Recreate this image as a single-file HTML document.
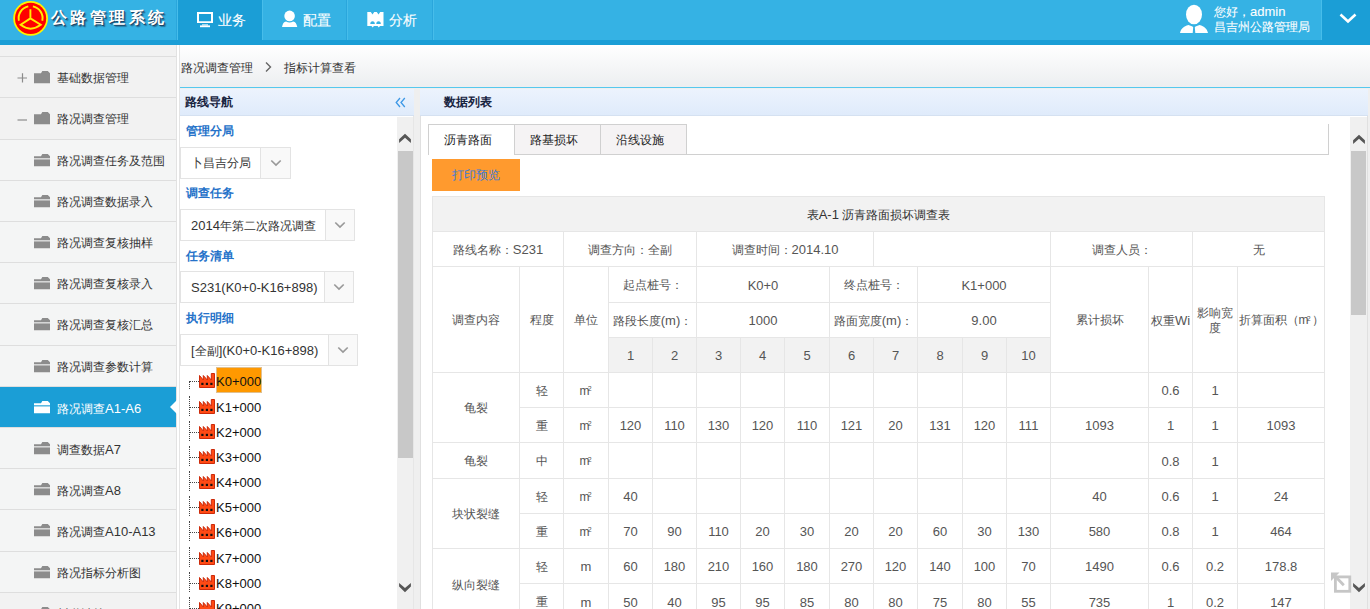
<!DOCTYPE html><html><head><meta charset="utf-8"><style>
*{margin:0;padding:0;box-sizing:border-box}
html,body{width:1370px;height:609px;overflow:hidden;background:#fff;font-family:"Liberation Sans", sans-serif;font-size:12px;color:#333}
.ab{position:absolute}
.t{position:absolute;white-space:nowrap;line-height:1}

</style></head><body>
<div class="ab" style="left:0;top:0;width:1370px;height:40px;background:#35b2e4"></div>
<div class="ab" style="left:0;top:40px;width:1370px;height:5px;background:#1b9ed6"></div>
<div class="ab" style="left:178px;top:0;width:84px;height:40px;background:#1b9ed6"></div>
<div class="ab" style="left:176px;top:0;width:1px;height:40px;background:#2aa6dc"></div>
<div class="ab" style="left:346px;top:0;width:1px;height:40px;background:#2aa6dc"></div>
<div class="ab" style="left:432px;top:0;width:1px;height:40px;background:#2aa6dc"></div>
<div class="ab" style="left:177px;top:0;width:1px;height:40px;background:#47bdea"></div>
<div class="ab" style="left:262px;top:0;width:1px;height:40px;background:#47bdea"></div>
<div class="ab" style="left:347px;top:0;width:1px;height:40px;background:#47bdea"></div>
<div class="ab" style="left:433px;top:0;width:1px;height:40px;background:#47bdea"></div>
<div class="ab" style="left:1321px;top:0;width:1px;height:40px;background:#47bdea"></div>
<div class="ab" style="left:1322px;top:0;width:48px;height:40px;background:#1b9ed6"></div>
<svg class="ab" style="left:12px;top:0px" width="38" height="38" viewBox="0 0 38 38">
<circle cx="18.6" cy="18.4" r="17.4" fill="#fff200"/>
<circle cx="18.6" cy="18.4" r="15.6" fill="#f00"/>
<g fill="none" stroke="#ffee00" stroke-width="1.9">
<path d="M16.3 6.4 A12 12 0 0 0 6.9 20.8"/>
<path d="M20.9 6.4 A12 12 0 0 1 30.3 20.8"/>
<path d="M18.4 9.3 V18.4 L8.6 24.8 Q18.6 32.5 28.8 24.8 L18.4 18.4"/>
</g></svg>
<div class="t" style="left:51px;top:10px;font-size:16px;font-weight:bold;color:#fff;letter-spacing:3.4px;text-shadow:1px 1px 0 #1d4666,2px 2px 1px rgba(10,40,70,.45)">公路管理系统</div>
<svg class="ab" style="left:197px;top:12px" width="17" height="16" viewBox="0 0 17 16">
<path d="M0 0H16V11H0Z M2 2V9.2H14V2Z" fill="#fff" fill-rule="evenodd"/>
<rect x="5" y="12.4" width="6" height="1" fill="#fff"/><rect x="3" y="13.4" width="10" height="1.8" fill="#fff"/></svg>
<div class="t" style="left:218px;top:13px;font-size:14px;color:#fff;-webkit-text-stroke:0.12px #fff">业务</div>
<svg class="ab" style="left:281px;top:10px" width="18" height="18" viewBox="0 0 18 18">
<circle cx="8.6" cy="5.9" r="5.3" fill="#fff"/>
<path d="M1 17 C1.8 13.5 2.8 12 5 11.6 C6.3 12.2 7.4 12.5 8.6 12.5 C9.8 12.5 10.9 12.2 12.2 11.6 C14.4 12 15.4 13.5 16.3 17Z" fill="#fff"/></svg>
<div class="t" style="left:303px;top:13px;font-size:14px;color:#fff;-webkit-text-stroke:0.12px #fff">配置</div>
<svg class="ab" style="left:367px;top:12px" width="17" height="16" viewBox="0 0 17 16">
<path d="M0.3 0 H3.8 L5.5 2.6 L7.2 0 H9.8 L11.5 2.6 L13.2 0 H16.5 V14 H13 L11.8 15.5 L10.6 14 H6.9 L5.7 15.5 L4.5 14 H0.3Z" fill="#fff"/>
<path d="M3.3 12 A2.25 2.7 0 0 1 7.8 12Z M9.3 12 A2.25 2.7 0 0 1 13.8 12Z" fill="#35b2e4"/></svg>
<div class="t" style="left:389px;top:13px;font-size:14px;color:#fff;-webkit-text-stroke:0.12px #fff">分析</div>
<svg class="ab" style="left:1179px;top:4px" width="30" height="30" viewBox="0 0 30 30">
<ellipse cx="15" cy="10.5" rx="8" ry="9.8" fill="#fff"/>
<path d="M1 29 C2 24.5 4.5 22.5 9.5 21 L13.5 22.5 L14.2 23.2 L13.7 29 H16.3 L15.8 23.2 L16.5 22.5 L20.5 21 C25.5 22.5 28 24.5 29 29Z" fill="#fff"/></svg>
<div class="t" style="left:1214px;top:4px;font-size:12px;color:#fff;line-height:15px;-webkit-text-stroke:0.1px #fff">您好，<span style="font-size:13px">admin</span><br>昌吉州公路管理局</div>
<svg class="ab" style="left:1339px;top:13px" width="18" height="11" viewBox="0 0 18 11">
<path d="M1.5 1.5 L9 8.5 L16.5 1.5" fill="none" stroke="#fff" stroke-width="2.6"/></svg>
<div class="ab" style="left:0;top:45px;width:176px;height:564px;background:#f2f2f2"></div>
<div class="ab" style="left:0;top:139px;width:176px;height:453px;background:#f4f5f5"></div>
<div class="ab" style="left:176px;top:45px;width:1px;height:564px;background:#e2e2e2"></div>
<div class="ab" style="left:177px;top:45px;width:2px;height:564px;background:#fff"></div>
<div class="ab" style="left:179px;top:45px;width:1px;height:564px;background:#e4e4e4"></div>
<div class="ab" style="left:0;top:56px;width:176px;height:1px;background:#dedede"></div>
<div class="ab" style="left:0;top:97px;width:176px;height:1px;background:#dedede"></div>
<div class="ab" style="left:0;top:139px;width:176px;height:1px;background:#dedede"></div>
<div class="ab" style="left:0;top:180px;width:176px;height:1px;background:#dedede"></div>
<div class="ab" style="left:0;top:221px;width:176px;height:1px;background:#dedede"></div>
<div class="ab" style="left:0;top:262px;width:176px;height:1px;background:#dedede"></div>
<div class="ab" style="left:0;top:303px;width:176px;height:1px;background:#dedede"></div>
<div class="ab" style="left:0;top:345px;width:176px;height:1px;background:#dedede"></div>
<div class="ab" style="left:0;top:386px;width:176px;height:1px;background:#dedede"></div>
<div class="ab" style="left:0;top:427px;width:176px;height:1px;background:#dedede"></div>
<div class="ab" style="left:0;top:468px;width:176px;height:1px;background:#dedede"></div>
<div class="ab" style="left:0;top:509px;width:176px;height:1px;background:#dedede"></div>
<div class="ab" style="left:0;top:551px;width:176px;height:1px;background:#dedede"></div>
<div class="ab" style="left:0;top:592px;width:176px;height:1px;background:#dedede"></div>
<svg class="ab" style="left:34px;top:71.0px" width="16" height="13" viewBox="0 0 16 13"><path d="M0 2.2 H7 L8.3 0 H13.8 L16 2.2 V12.2 H0Z" fill="#8c8c8c"/></svg>
<div class="t" style="left:57px;top:72px;font-size:12px;color:#333">基础数据管理</div>
<svg class="ab" style="left:17px;top:72px" width="11" height="11" viewBox="0 0 11 11"><path d="M0.5 6 H10 M5.5 1.3 V10.5" stroke="#8c8c8c" stroke-width="1.2"/></svg>
<svg class="ab" style="left:34px;top:112.0px" width="16" height="13" viewBox="0 0 16 13"><path d="M0 2.2 H7 L8.3 0 H13.8 L16 2.2 V12.2 H0Z" fill="#8c8c8c"/></svg>
<div class="t" style="left:57px;top:113px;font-size:12px;color:#333">路况调查管理</div>
<svg class="ab" style="left:17px;top:114px" width="11" height="11" viewBox="0 0 11 11"><path d="M0.5 6 H10" stroke="#8c8c8c" stroke-width="1.2"/></svg>
<svg class="ab" style="left:34px;top:154.0px" width="16" height="13" viewBox="0 0 16 13"><path d="M0 2.2 H7 L8.3 0 H13.8 L16 2.2 V12.2 H0Z" fill="#8c8c8c"/><rect x="0" y="4.3" width="16" height="1.1" fill="#f4f5f5"/></svg>
<div class="t" style="left:57px;top:155px;font-size:12px;color:#333">路况调查任务及范围</div>
<svg class="ab" style="left:34px;top:195.0px" width="16" height="13" viewBox="0 0 16 13"><path d="M0 2.2 H7 L8.3 0 H13.8 L16 2.2 V12.2 H0Z" fill="#8c8c8c"/><rect x="0" y="4.3" width="16" height="1.1" fill="#f4f5f5"/></svg>
<div class="t" style="left:57px;top:196px;font-size:12px;color:#333">路况调查数据录入</div>
<svg class="ab" style="left:34px;top:236.0px" width="16" height="13" viewBox="0 0 16 13"><path d="M0 2.2 H7 L8.3 0 H13.8 L16 2.2 V12.2 H0Z" fill="#8c8c8c"/><rect x="0" y="4.3" width="16" height="1.1" fill="#f4f5f5"/></svg>
<div class="t" style="left:57px;top:237px;font-size:12px;color:#333">路况调查复核抽样</div>
<svg class="ab" style="left:34px;top:277.0px" width="16" height="13" viewBox="0 0 16 13"><path d="M0 2.2 H7 L8.3 0 H13.8 L16 2.2 V12.2 H0Z" fill="#8c8c8c"/><rect x="0" y="4.3" width="16" height="1.1" fill="#f4f5f5"/></svg>
<div class="t" style="left:57px;top:278px;font-size:12px;color:#333">路况调查复核录入</div>
<svg class="ab" style="left:34px;top:318.0px" width="16" height="13" viewBox="0 0 16 13"><path d="M0 2.2 H7 L8.3 0 H13.8 L16 2.2 V12.2 H0Z" fill="#8c8c8c"/><rect x="0" y="4.3" width="16" height="1.1" fill="#f4f5f5"/></svg>
<div class="t" style="left:57px;top:319px;font-size:12px;color:#333">路况调查复核汇总</div>
<svg class="ab" style="left:34px;top:360.0px" width="16" height="13" viewBox="0 0 16 13"><path d="M0 2.2 H7 L8.3 0 H13.8 L16 2.2 V12.2 H0Z" fill="#8c8c8c"/><rect x="0" y="4.3" width="16" height="1.1" fill="#f4f5f5"/></svg>
<div class="t" style="left:57px;top:361px;font-size:12px;color:#333">路况调查参数计算</div>
<div class="ab" style="left:0;top:387px;width:176px;height:40px;background:#1b9ed6"></div>
<svg class="ab" style="left:169px;top:400px" width="8" height="14" viewBox="0 0 8 14"><path d="M8 0 L1 7 L8 14Z" fill="#fff"/></svg>
<svg class="ab" style="left:34px;top:401.0px" width="16" height="13" viewBox="0 0 16 13"><path d="M0 2.2 H7 L8.3 0 H13.8 L16 2.2 V12.2 H0Z" fill="#fff"/><rect x="0" y="4.3" width="16" height="1.1" fill="#1b9ed6"/></svg>
<div class="t" style="left:57px;top:402px;font-size:12px;color:#fff">路况调查<span style="font-size:13px">A1-A6</span></div>
<svg class="ab" style="left:34px;top:442.0px" width="16" height="13" viewBox="0 0 16 13"><path d="M0 2.2 H7 L8.3 0 H13.8 L16 2.2 V12.2 H0Z" fill="#8c8c8c"/><rect x="0" y="4.3" width="16" height="1.1" fill="#f4f5f5"/></svg>
<div class="t" style="left:57px;top:443px;font-size:12px;color:#333">调查数据<span style="font-size:13px">A7</span></div>
<svg class="ab" style="left:34px;top:483.0px" width="16" height="13" viewBox="0 0 16 13"><path d="M0 2.2 H7 L8.3 0 H13.8 L16 2.2 V12.2 H0Z" fill="#8c8c8c"/><rect x="0" y="4.3" width="16" height="1.1" fill="#f4f5f5"/></svg>
<div class="t" style="left:57px;top:484px;font-size:12px;color:#333">路况调查<span style="font-size:13px">A8</span></div>
<svg class="ab" style="left:34px;top:524.0px" width="16" height="13" viewBox="0 0 16 13"><path d="M0 2.2 H7 L8.3 0 H13.8 L16 2.2 V12.2 H0Z" fill="#8c8c8c"/><rect x="0" y="4.3" width="16" height="1.1" fill="#f4f5f5"/></svg>
<div class="t" style="left:57px;top:525px;font-size:12px;color:#333">路况调查<span style="font-size:13px">A10-A13</span></div>
<svg class="ab" style="left:34px;top:566.0px" width="16" height="13" viewBox="0 0 16 13"><path d="M0 2.2 H7 L8.3 0 H13.8 L16 2.2 V12.2 H0Z" fill="#8c8c8c"/><rect x="0" y="4.3" width="16" height="1.1" fill="#f4f5f5"/></svg>
<div class="t" style="left:57px;top:567px;font-size:12px;color:#333">路况指标分析图</div>
<svg class="ab" style="left:34px;top:607.0px" width="16" height="13" viewBox="0 0 16 13"><path d="M0 2.2 H7 L8.3 0 H13.8 L16 2.2 V12.2 H0Z" fill="#8c8c8c"/></svg>
<div class="t" style="left:57px;top:608px;font-size:12px;color:#333">川道计算</div>
<svg class="ab" style="left:17px;top:608px" width="11" height="11" viewBox="0 0 11 11"><path d="M0.5 6 H10 M5.5 1.3 V10.5" stroke="#8c8c8c" stroke-width="1.2"/></svg>
<div class="ab" style="left:180px;top:45px;width:1190px;height:42px;background:linear-gradient(#fff,#eceef0)"></div>
<div class="ab" style="left:180px;top:87px;width:1190px;height:1px;background:#55c8ee"></div>
<div class="ab" style="left:180px;top:88px;width:1190px;height:521px;background:#efefef"></div>
<div class="t" style="left:181px;top:62px;font-size:12px;color:#333">路况调查管理</div>
<svg class="ab" style="left:264px;top:61px" width="9" height="12" viewBox="0 0 9 12"><path d="M2 1.5 L6.5 6 L2 10.5" fill="none" stroke="#666" stroke-width="1.4"/></svg>
<div class="t" style="left:284px;top:62px;font-size:12px;color:#333">指标计算查看</div>
<div class="ab" style="left:180px;top:89px;width:234px;height:520px;background:#fff;border-right:1px solid #e6e6e6"></div>
<div class="ab" style="left:180px;top:89px;width:234px;height:27px;background:linear-gradient(#ecf3fd,#dfebfb);border-bottom:1px solid #d5e1f1"></div>
<div class="t" style="left:185px;top:96px;font-size:12px;font-weight:bold;color:#17233f">路线导航</div>
<svg class="ab" style="left:395px;top:97px" width="11" height="11" viewBox="0 0 11 11"><path d="M5 1 L1.2 5.5 L5 10 M9.8 1 L6 5.5 L9.8 10" fill="none" stroke="#3d98e6" stroke-width="1.3"/></svg>
<div class="t" style="left:186px;top:125px;font-size:12px;font-weight:bold;color:#2572c9">管理分局</div>
<div class="t" style="left:186px;top:187px;font-size:12px;font-weight:bold;color:#2572c9">调查任务</div>
<div class="t" style="left:186px;top:250px;font-size:12px;font-weight:bold;color:#2572c9">任务清单</div>
<div class="t" style="left:186px;top:312px;font-size:12px;font-weight:bold;color:#2572c9">执行明细</div>
<div class="ab" style="left:180px;top:147px;width:111px;height:32px;border:1px solid #e3e3e3;background:#fff"></div>
<div class="ab" style="left:260px;top:147px;width:31px;height:32px;border:1px solid #e3e3e3;background:#f9f9f9"></div>
<svg class="ab" style="left:270px;top:159px" width="12" height="8" viewBox="0 0 12 8"><path d="M1.3 1.5 L6 6 L10.7 1.5" fill="none" stroke="#999" stroke-width="1.7"/></svg>
<div class="t" style="left:191px;top:157px;font-size:12px;color:#333">卜昌吉分局</div>
<div class="ab" style="left:180px;top:209px;width:175px;height:32px;border:1px solid #e3e3e3;background:#fff"></div>
<div class="ab" style="left:325px;top:209px;width:30px;height:32px;border:1px solid #e3e3e3;background:#f9f9f9"></div>
<svg class="ab" style="left:334px;top:221px" width="12" height="8" viewBox="0 0 12 8"><path d="M1.3 1.5 L6 6 L10.7 1.5" fill="none" stroke="#999" stroke-width="1.7"/></svg>
<div class="t" style="left:191px;top:219px;font-size:12px;color:#333"><span style="font-size:13px">2014</span>年第二次路况调查</div>
<div class="ab" style="left:180px;top:271px;width:174px;height:32px;border:1px solid #e3e3e3;background:#fff"></div>
<div class="ab" style="left:324px;top:271px;width:30px;height:32px;border:1px solid #e3e3e3;background:#f9f9f9"></div>
<svg class="ab" style="left:333px;top:283px" width="12" height="8" viewBox="0 0 12 8"><path d="M1.3 1.5 L6 6 L10.7 1.5" fill="none" stroke="#999" stroke-width="1.7"/></svg>
<div class="t" style="left:191px;top:281px;font-size:12px;color:#333"><span style="font-size:13px">S231(K0+0-K16+898)</span></div>
<div class="ab" style="left:180px;top:334px;width:178px;height:32px;border:1px solid #e3e3e3;background:#fff"></div>
<div class="ab" style="left:328px;top:334px;width:30px;height:32px;border:1px solid #e3e3e3;background:#f9f9f9"></div>
<svg class="ab" style="left:337px;top:346px" width="12" height="8" viewBox="0 0 12 8"><path d="M1.3 1.5 L6 6 L10.7 1.5" fill="none" stroke="#999" stroke-width="1.7"/></svg>
<div class="t" style="left:191px;top:344px;font-size:12px;color:#333"><span style="font-size:13px">[</span>全副<span style="font-size:13px">](K0+0-K16+898)</span></div>
<div class="ab" style="left:216px;top:367px;width:46px;height:26px;background:#ff9900;border:1px solid #e0c090"></div>
<div class="ab" style="left:189px;top:381px;width:1px;height:8px;border-left:1px dotted #444"></div>
<div class="ab" style="left:190px;top:381px;width:9px;height:1px;border-top:1px dotted #444"></div>
<svg class="ab" style="left:199px;top:372.5px" width="16" height="15" viewBox="0 0 16 15">
<path d="M0.5 14.5 V2.5 L4.3 7 V2.5 L8.3 7 V2.5 L12.3 7 V0.5 H15.5 V14.5Z" fill="#ff4a14" stroke="#cc2a0a" stroke-width="1" stroke-linejoin="miter"/>
<rect x="2.3" y="9.8" width="2.2" height="2.2" fill="#111"/><rect x="6.8" y="9.8" width="2.2" height="2.2" fill="#111"/><rect x="11.3" y="9.8" width="2.2" height="2.2" fill="#111"/></svg>
<div class="t" style="left:216px;top:375px;font-size:13px;color:#111">K0+000</div>
<div class="ab" style="left:189px;top:396px;width:1px;height:20px;border-left:1px dotted #444"></div>
<div class="ab" style="left:190px;top:407px;width:9px;height:1px;border-top:1px dotted #444"></div>
<svg class="ab" style="left:199px;top:398.5px" width="16" height="15" viewBox="0 0 16 15">
<path d="M0.5 14.5 V2.5 L4.3 7 V2.5 L8.3 7 V2.5 L12.3 7 V0.5 H15.5 V14.5Z" fill="#ff4a14" stroke="#cc2a0a" stroke-width="1" stroke-linejoin="miter"/>
<rect x="2.3" y="9.8" width="2.2" height="2.2" fill="#111"/><rect x="6.8" y="9.8" width="2.2" height="2.2" fill="#111"/><rect x="11.3" y="9.8" width="2.2" height="2.2" fill="#111"/></svg>
<div class="t" style="left:216px;top:401px;font-size:13px;color:#111">K1+000</div>
<div class="ab" style="left:189px;top:421px;width:1px;height:20px;border-left:1px dotted #444"></div>
<div class="ab" style="left:190px;top:432px;width:9px;height:1px;border-top:1px dotted #444"></div>
<svg class="ab" style="left:199px;top:423.5px" width="16" height="15" viewBox="0 0 16 15">
<path d="M0.5 14.5 V2.5 L4.3 7 V2.5 L8.3 7 V2.5 L12.3 7 V0.5 H15.5 V14.5Z" fill="#ff4a14" stroke="#cc2a0a" stroke-width="1" stroke-linejoin="miter"/>
<rect x="2.3" y="9.8" width="2.2" height="2.2" fill="#111"/><rect x="6.8" y="9.8" width="2.2" height="2.2" fill="#111"/><rect x="11.3" y="9.8" width="2.2" height="2.2" fill="#111"/></svg>
<div class="t" style="left:216px;top:426px;font-size:13px;color:#111">K2+000</div>
<div class="ab" style="left:189px;top:446px;width:1px;height:20px;border-left:1px dotted #444"></div>
<div class="ab" style="left:190px;top:457px;width:9px;height:1px;border-top:1px dotted #444"></div>
<svg class="ab" style="left:199px;top:448.5px" width="16" height="15" viewBox="0 0 16 15">
<path d="M0.5 14.5 V2.5 L4.3 7 V2.5 L8.3 7 V2.5 L12.3 7 V0.5 H15.5 V14.5Z" fill="#ff4a14" stroke="#cc2a0a" stroke-width="1" stroke-linejoin="miter"/>
<rect x="2.3" y="9.8" width="2.2" height="2.2" fill="#111"/><rect x="6.8" y="9.8" width="2.2" height="2.2" fill="#111"/><rect x="11.3" y="9.8" width="2.2" height="2.2" fill="#111"/></svg>
<div class="t" style="left:216px;top:451px;font-size:13px;color:#111">K3+000</div>
<div class="ab" style="left:189px;top:471px;width:1px;height:20px;border-left:1px dotted #444"></div>
<div class="ab" style="left:190px;top:482px;width:9px;height:1px;border-top:1px dotted #444"></div>
<svg class="ab" style="left:199px;top:473.5px" width="16" height="15" viewBox="0 0 16 15">
<path d="M0.5 14.5 V2.5 L4.3 7 V2.5 L8.3 7 V2.5 L12.3 7 V0.5 H15.5 V14.5Z" fill="#ff4a14" stroke="#cc2a0a" stroke-width="1" stroke-linejoin="miter"/>
<rect x="2.3" y="9.8" width="2.2" height="2.2" fill="#111"/><rect x="6.8" y="9.8" width="2.2" height="2.2" fill="#111"/><rect x="11.3" y="9.8" width="2.2" height="2.2" fill="#111"/></svg>
<div class="t" style="left:216px;top:476px;font-size:13px;color:#111">K4+000</div>
<div class="ab" style="left:189px;top:496px;width:1px;height:20px;border-left:1px dotted #444"></div>
<div class="ab" style="left:190px;top:507px;width:9px;height:1px;border-top:1px dotted #444"></div>
<svg class="ab" style="left:199px;top:498.5px" width="16" height="15" viewBox="0 0 16 15">
<path d="M0.5 14.5 V2.5 L4.3 7 V2.5 L8.3 7 V2.5 L12.3 7 V0.5 H15.5 V14.5Z" fill="#ff4a14" stroke="#cc2a0a" stroke-width="1" stroke-linejoin="miter"/>
<rect x="2.3" y="9.8" width="2.2" height="2.2" fill="#111"/><rect x="6.8" y="9.8" width="2.2" height="2.2" fill="#111"/><rect x="11.3" y="9.8" width="2.2" height="2.2" fill="#111"/></svg>
<div class="t" style="left:216px;top:501px;font-size:13px;color:#111">K5+000</div>
<div class="ab" style="left:189px;top:521px;width:1px;height:20px;border-left:1px dotted #444"></div>
<div class="ab" style="left:190px;top:532px;width:9px;height:1px;border-top:1px dotted #444"></div>
<svg class="ab" style="left:199px;top:523.5px" width="16" height="15" viewBox="0 0 16 15">
<path d="M0.5 14.5 V2.5 L4.3 7 V2.5 L8.3 7 V2.5 L12.3 7 V0.5 H15.5 V14.5Z" fill="#ff4a14" stroke="#cc2a0a" stroke-width="1" stroke-linejoin="miter"/>
<rect x="2.3" y="9.8" width="2.2" height="2.2" fill="#111"/><rect x="6.8" y="9.8" width="2.2" height="2.2" fill="#111"/><rect x="11.3" y="9.8" width="2.2" height="2.2" fill="#111"/></svg>
<div class="t" style="left:216px;top:526px;font-size:13px;color:#111">K6+000</div>
<div class="ab" style="left:189px;top:547px;width:1px;height:20px;border-left:1px dotted #444"></div>
<div class="ab" style="left:190px;top:558px;width:9px;height:1px;border-top:1px dotted #444"></div>
<svg class="ab" style="left:199px;top:549.5px" width="16" height="15" viewBox="0 0 16 15">
<path d="M0.5 14.5 V2.5 L4.3 7 V2.5 L8.3 7 V2.5 L12.3 7 V0.5 H15.5 V14.5Z" fill="#ff4a14" stroke="#cc2a0a" stroke-width="1" stroke-linejoin="miter"/>
<rect x="2.3" y="9.8" width="2.2" height="2.2" fill="#111"/><rect x="6.8" y="9.8" width="2.2" height="2.2" fill="#111"/><rect x="11.3" y="9.8" width="2.2" height="2.2" fill="#111"/></svg>
<div class="t" style="left:216px;top:552px;font-size:13px;color:#111">K7+000</div>
<div class="ab" style="left:189px;top:572px;width:1px;height:20px;border-left:1px dotted #444"></div>
<div class="ab" style="left:190px;top:583px;width:9px;height:1px;border-top:1px dotted #444"></div>
<svg class="ab" style="left:199px;top:574.5px" width="16" height="15" viewBox="0 0 16 15">
<path d="M0.5 14.5 V2.5 L4.3 7 V2.5 L8.3 7 V2.5 L12.3 7 V0.5 H15.5 V14.5Z" fill="#ff4a14" stroke="#cc2a0a" stroke-width="1" stroke-linejoin="miter"/>
<rect x="2.3" y="9.8" width="2.2" height="2.2" fill="#111"/><rect x="6.8" y="9.8" width="2.2" height="2.2" fill="#111"/><rect x="11.3" y="9.8" width="2.2" height="2.2" fill="#111"/></svg>
<div class="t" style="left:216px;top:577px;font-size:13px;color:#111">K8+000</div>
<div class="ab" style="left:189px;top:597px;width:1px;height:20px;border-left:1px dotted #444"></div>
<div class="ab" style="left:190px;top:608px;width:9px;height:1px;border-top:1px dotted #444"></div>
<svg class="ab" style="left:199px;top:599.5px" width="16" height="15" viewBox="0 0 16 15">
<path d="M0.5 14.5 V2.5 L4.3 7 V2.5 L8.3 7 V2.5 L12.3 7 V0.5 H15.5 V14.5Z" fill="#ff4a14" stroke="#cc2a0a" stroke-width="1" stroke-linejoin="miter"/>
<rect x="2.3" y="9.8" width="2.2" height="2.2" fill="#111"/><rect x="6.8" y="9.8" width="2.2" height="2.2" fill="#111"/><rect x="11.3" y="9.8" width="2.2" height="2.2" fill="#111"/></svg>
<div class="t" style="left:216px;top:602px;font-size:13px;color:#111">K9+000</div>
<div class="ab" style="left:397px;top:117px;width:16px;height:492px;background:#f0f0f0"></div>
<div class="ab" style="left:398px;top:151px;width:15px;height:307px;background:#c8c8c8"></div>
<svg class="ab" style="left:398px;top:133px" width="14" height="10" viewBox="0 0 14 10"><path d="M1.1 6.2 L7 0.8 L12.9 6.2 V10 L7 4.8 L1.1 10Z" fill="#565656"/></svg>
<svg class="ab" style="left:398px;top:583px" width="14" height="10" viewBox="0 0 14 10"><path d="M1.1 0 L7 5 L12.9 0 V3.6 L7 9.2 L1.1 3.6Z" fill="#565656"/></svg>
<div class="ab" style="left:420px;top:89px;width:948px;height:520px;background:#fff;border-left:1px solid #e0e0e0;border-right:1px solid #e0e0e0"></div>
<div class="ab" style="left:420px;top:89px;width:948px;height:27px;background:linear-gradient(#ecf3fd,#dfebfb);border-bottom:1px solid #d5e1f1"></div>
<div class="t" style="left:444px;top:96px;font-size:12px;font-weight:bold;color:#17233f">数据列表</div>
<div class="ab" style="left:428px;top:154px;width:901px;height:1px;background:#d0d0d0"></div>
<div class="ab" style="left:1328px;top:124px;width:1px;height:31px;background:#d0d0d0"></div>
<div class="ab" style="left:428px;top:124px;width:87px;height:31px;border:1px solid #d0d0d0;border-bottom:none;background:#fff"></div>
<div class="t" style="left:444px;top:134px;font-size:12px;color:#222">沥青路面</div>
<div class="ab" style="left:514px;top:124px;width:87px;height:31px;border:1px solid #d0d0d0;background:#f5f3f4"></div>
<div class="t" style="left:530px;top:134px;font-size:12px;color:#222">路基损坏</div>
<div class="ab" style="left:600px;top:124px;width:87px;height:31px;border:1px solid #d0d0d0;background:#f5f3f4"></div>
<div class="t" style="left:616px;top:134px;font-size:12px;color:#222">沿线设施</div>
<div class="ab" style="left:429px;top:154px;width:85px;height:1px;background:#fff"></div>
<div class="ab" style="left:432px;top:159px;width:88px;height:32px;background:#ff9a2e"></div>
<div class="t" style="left:452px;top:169px;font-size:12px;color:#3b7bd6">打印预览</div>
<div class="ab" style="left:432px;top:196px;width:894px;height:413px;background:#fff"></div>
<div class="ab" style="left:432px;top:196px;width:893px;height:36px;background:#f2f2f2;border:1px solid #e6e6e6;display:flex;align-items:center;justify-content:center;text-align:center;color:#555;font-size:12px;line-height:15px;padding-top:2px;color:#333;"><span>表<span style="font-size:13px">A-1</span> 沥青路面损坏调查表</span></div>
<div class="ab" style="left:432px;top:231px;width:132px;height:36px;border:1px solid #e6e6e6;display:flex;align-items:center;justify-content:center;text-align:center;color:#555;font-size:12px;line-height:15px;padding-top:2px;"><span>路线名称：<span style="font-size:13px">S231</span></span></div>
<div class="ab" style="left:563px;top:231px;width:134px;height:36px;border:1px solid #e6e6e6;display:flex;align-items:center;justify-content:center;text-align:center;color:#555;font-size:12px;line-height:15px;padding-top:2px;"><span>调查方向：全副</span></div>
<div class="ab" style="left:696px;top:231px;width:178px;height:36px;border:1px solid #e6e6e6;display:flex;align-items:center;justify-content:center;text-align:center;color:#555;font-size:12px;line-height:15px;padding-top:2px;"><span>调查时间：<span style="font-size:13px">2014.10</span></span></div>
<div class="ab" style="left:873px;top:231px;width:178px;height:36px;border:1px solid #e6e6e6;display:flex;align-items:center;justify-content:center;text-align:center;color:#555;font-size:12px;line-height:15px;padding-top:2px;"><span></span></div>
<div class="ab" style="left:1050px;top:231px;width:143px;height:36px;border:1px solid #e6e6e6;display:flex;align-items:center;justify-content:center;text-align:center;color:#555;font-size:12px;line-height:15px;padding-top:2px;"><span>调查人员：</span></div>
<div class="ab" style="left:1192px;top:231px;width:133px;height:36px;border:1px solid #e6e6e6;display:flex;align-items:center;justify-content:center;text-align:center;color:#555;font-size:12px;line-height:15px;padding-top:2px;"><span>无</span></div>
<div class="ab" style="left:432px;top:266px;width:88px;height:107px;border:1px solid #e6e6e6;display:flex;align-items:center;justify-content:center;text-align:center;color:#555;font-size:12px;line-height:15px;padding-top:2px;"><span>调查内容</span></div>
<div class="ab" style="left:519px;top:266px;width:45px;height:107px;border:1px solid #e6e6e6;display:flex;align-items:center;justify-content:center;text-align:center;color:#555;font-size:12px;line-height:15px;padding-top:2px;"><span>程度</span></div>
<div class="ab" style="left:563px;top:266px;width:46px;height:107px;border:1px solid #e6e6e6;display:flex;align-items:center;justify-content:center;text-align:center;color:#555;font-size:12px;line-height:15px;padding-top:2px;"><span>单位</span></div>
<div class="ab" style="left:608px;top:266px;width:89px;height:37px;border:1px solid #e6e6e6;display:flex;align-items:center;justify-content:center;text-align:center;color:#555;font-size:12px;line-height:15px;padding-top:2px;"><span>起点桩号：</span></div>
<div class="ab" style="left:696px;top:266px;width:134px;height:37px;border:1px solid #e6e6e6;display:flex;align-items:center;justify-content:center;text-align:center;color:#555;font-size:12px;line-height:15px;padding-top:2px;"><span><span style="font-size:13px">K0+0</span></span></div>
<div class="ab" style="left:829px;top:266px;width:89px;height:37px;border:1px solid #e6e6e6;display:flex;align-items:center;justify-content:center;text-align:center;color:#555;font-size:12px;line-height:15px;padding-top:2px;"><span>终点桩号：</span></div>
<div class="ab" style="left:917px;top:266px;width:134px;height:37px;border:1px solid #e6e6e6;display:flex;align-items:center;justify-content:center;text-align:center;color:#555;font-size:12px;line-height:15px;padding-top:2px;"><span><span style="font-size:13px">K1+000</span></span></div>
<div class="ab" style="left:608px;top:302px;width:89px;height:36px;border:1px solid #e6e6e6;display:flex;align-items:center;justify-content:center;text-align:center;color:#555;font-size:12px;line-height:15px;padding-top:2px;"><span>路段长度<span style="font-size:13px">(m)</span>：</span></div>
<div class="ab" style="left:696px;top:302px;width:134px;height:36px;border:1px solid #e6e6e6;display:flex;align-items:center;justify-content:center;text-align:center;color:#555;font-size:12px;line-height:15px;padding-top:2px;"><span><span style="font-size:13px">1000</span></span></div>
<div class="ab" style="left:829px;top:302px;width:89px;height:36px;border:1px solid #e6e6e6;display:flex;align-items:center;justify-content:center;text-align:center;color:#555;font-size:12px;line-height:15px;padding-top:2px;"><span>路面宽度<span style="font-size:13px">(m)</span>：</span></div>
<div class="ab" style="left:917px;top:302px;width:134px;height:36px;border:1px solid #e6e6e6;display:flex;align-items:center;justify-content:center;text-align:center;color:#555;font-size:12px;line-height:15px;padding-top:2px;"><span><span style="font-size:13px">9.00</span></span></div>
<div class="ab" style="left:608px;top:337px;width:45px;height:36px;background:#f2f2f2;border:1px solid #e6e6e6;display:flex;align-items:center;justify-content:center;text-align:center;color:#555;font-size:12px;line-height:15px;padding-top:2px;"><span><span style="font-size:13px">1</span></span></div>
<div class="ab" style="left:652px;top:337px;width:45px;height:36px;background:#f2f2f2;border:1px solid #e6e6e6;display:flex;align-items:center;justify-content:center;text-align:center;color:#555;font-size:12px;line-height:15px;padding-top:2px;"><span><span style="font-size:13px">2</span></span></div>
<div class="ab" style="left:696px;top:337px;width:45px;height:36px;background:#f2f2f2;border:1px solid #e6e6e6;display:flex;align-items:center;justify-content:center;text-align:center;color:#555;font-size:12px;line-height:15px;padding-top:2px;"><span><span style="font-size:13px">3</span></span></div>
<div class="ab" style="left:740px;top:337px;width:45px;height:36px;background:#f2f2f2;border:1px solid #e6e6e6;display:flex;align-items:center;justify-content:center;text-align:center;color:#555;font-size:12px;line-height:15px;padding-top:2px;"><span><span style="font-size:13px">4</span></span></div>
<div class="ab" style="left:784px;top:337px;width:46px;height:36px;background:#f2f2f2;border:1px solid #e6e6e6;display:flex;align-items:center;justify-content:center;text-align:center;color:#555;font-size:12px;line-height:15px;padding-top:2px;"><span><span style="font-size:13px">5</span></span></div>
<div class="ab" style="left:829px;top:337px;width:45px;height:36px;background:#f2f2f2;border:1px solid #e6e6e6;display:flex;align-items:center;justify-content:center;text-align:center;color:#555;font-size:12px;line-height:15px;padding-top:2px;"><span><span style="font-size:13px">6</span></span></div>
<div class="ab" style="left:873px;top:337px;width:45px;height:36px;background:#f2f2f2;border:1px solid #e6e6e6;display:flex;align-items:center;justify-content:center;text-align:center;color:#555;font-size:12px;line-height:15px;padding-top:2px;"><span><span style="font-size:13px">7</span></span></div>
<div class="ab" style="left:917px;top:337px;width:46px;height:36px;background:#f2f2f2;border:1px solid #e6e6e6;display:flex;align-items:center;justify-content:center;text-align:center;color:#555;font-size:12px;line-height:15px;padding-top:2px;"><span><span style="font-size:13px">8</span></span></div>
<div class="ab" style="left:962px;top:337px;width:45px;height:36px;background:#f2f2f2;border:1px solid #e6e6e6;display:flex;align-items:center;justify-content:center;text-align:center;color:#555;font-size:12px;line-height:15px;padding-top:2px;"><span><span style="font-size:13px">9</span></span></div>
<div class="ab" style="left:1006px;top:337px;width:45px;height:36px;background:#f2f2f2;border:1px solid #e6e6e6;display:flex;align-items:center;justify-content:center;text-align:center;color:#555;font-size:12px;line-height:15px;padding-top:2px;"><span><span style="font-size:13px">10</span></span></div>
<div class="ab" style="left:1050px;top:266px;width:99px;height:107px;border:1px solid #e6e6e6;display:flex;align-items:center;justify-content:center;text-align:center;color:#555;font-size:12px;line-height:15px;padding-top:2px;"><span>累计损坏</span></div>
<div class="ab" style="left:1148px;top:266px;width:45px;height:107px;border:1px solid #e6e6e6;display:flex;align-items:center;justify-content:center;text-align:center;color:#555;font-size:12px;line-height:15px;padding-top:2px;"><span>权重<span style="font-size:13px">Wi</span></span></div>
<div class="ab" style="left:1192px;top:266px;width:46px;height:107px;border:1px solid #e6e6e6;display:flex;align-items:center;justify-content:center;text-align:center;color:#555;font-size:12px;line-height:15px;padding-top:2px;"><span>影响宽<br>度</span></div>
<div class="ab" style="left:1237px;top:266px;width:88px;height:107px;border:1px solid #e6e6e6;display:flex;align-items:center;justify-content:center;text-align:center;color:#555;font-size:12px;line-height:15px;padding-top:2px;"><span>折算面积（<span style="position:relative;display:inline-block;font-size:12px;padding-right:3px">m<span style="position:absolute;font-size:7px;left:8.2px;top:-2.5px">2</span></span>）</span></div>
<div class="ab" style="left:432px;top:372px;width:88px;height:71px;border:1px solid #e6e6e6;display:flex;align-items:center;justify-content:center;text-align:center;color:#555;font-size:12px;line-height:15px;padding-top:2px;"><span>龟裂</span></div>
<div class="ab" style="left:432px;top:442px;width:88px;height:37px;border:1px solid #e6e6e6;display:flex;align-items:center;justify-content:center;text-align:center;color:#555;font-size:12px;line-height:15px;padding-top:2px;"><span>龟裂</span></div>
<div class="ab" style="left:432px;top:478px;width:88px;height:71px;border:1px solid #e6e6e6;display:flex;align-items:center;justify-content:center;text-align:center;color:#555;font-size:12px;line-height:15px;padding-top:2px;"><span>块状裂缝</span></div>
<div class="ab" style="left:432px;top:548px;width:88px;height:72px;border:1px solid #e6e6e6;display:flex;align-items:center;justify-content:center;text-align:center;color:#555;font-size:12px;line-height:15px;padding-top:2px;"><span>纵向裂缝</span></div>
<div class="ab" style="left:519px;top:372px;width:45px;height:36px;border:1px solid #e6e6e6;display:flex;align-items:center;justify-content:center;text-align:center;color:#555;font-size:12px;line-height:15px;padding-top:2px;"><span>轻</span></div>
<div class="ab" style="left:563px;top:372px;width:46px;height:36px;border:1px solid #e6e6e6;display:flex;align-items:center;justify-content:center;text-align:center;color:#555;font-size:12px;line-height:15px;padding-top:2px;"><span><span style="position:relative;display:inline-block;font-size:12px;padding-right:3px">m<span style="position:absolute;font-size:7px;left:8.2px;top:-2.5px">2</span></span></span></div>
<div class="ab" style="left:608px;top:372px;width:45px;height:36px;border:1px solid #e6e6e6;display:flex;align-items:center;justify-content:center;text-align:center;color:#555;font-size:12px;line-height:15px;padding-top:2px;"><span></span></div>
<div class="ab" style="left:652px;top:372px;width:45px;height:36px;border:1px solid #e6e6e6;display:flex;align-items:center;justify-content:center;text-align:center;color:#555;font-size:12px;line-height:15px;padding-top:2px;"><span></span></div>
<div class="ab" style="left:696px;top:372px;width:45px;height:36px;border:1px solid #e6e6e6;display:flex;align-items:center;justify-content:center;text-align:center;color:#555;font-size:12px;line-height:15px;padding-top:2px;"><span></span></div>
<div class="ab" style="left:740px;top:372px;width:45px;height:36px;border:1px solid #e6e6e6;display:flex;align-items:center;justify-content:center;text-align:center;color:#555;font-size:12px;line-height:15px;padding-top:2px;"><span></span></div>
<div class="ab" style="left:784px;top:372px;width:46px;height:36px;border:1px solid #e6e6e6;display:flex;align-items:center;justify-content:center;text-align:center;color:#555;font-size:12px;line-height:15px;padding-top:2px;"><span></span></div>
<div class="ab" style="left:829px;top:372px;width:45px;height:36px;border:1px solid #e6e6e6;display:flex;align-items:center;justify-content:center;text-align:center;color:#555;font-size:12px;line-height:15px;padding-top:2px;"><span></span></div>
<div class="ab" style="left:873px;top:372px;width:45px;height:36px;border:1px solid #e6e6e6;display:flex;align-items:center;justify-content:center;text-align:center;color:#555;font-size:12px;line-height:15px;padding-top:2px;"><span></span></div>
<div class="ab" style="left:917px;top:372px;width:46px;height:36px;border:1px solid #e6e6e6;display:flex;align-items:center;justify-content:center;text-align:center;color:#555;font-size:12px;line-height:15px;padding-top:2px;"><span></span></div>
<div class="ab" style="left:962px;top:372px;width:45px;height:36px;border:1px solid #e6e6e6;display:flex;align-items:center;justify-content:center;text-align:center;color:#555;font-size:12px;line-height:15px;padding-top:2px;"><span></span></div>
<div class="ab" style="left:1006px;top:372px;width:45px;height:36px;border:1px solid #e6e6e6;display:flex;align-items:center;justify-content:center;text-align:center;color:#555;font-size:12px;line-height:15px;padding-top:2px;"><span></span></div>
<div class="ab" style="left:1050px;top:372px;width:99px;height:36px;border:1px solid #e6e6e6;display:flex;align-items:center;justify-content:center;text-align:center;color:#555;font-size:12px;line-height:15px;padding-top:2px;"><span></span></div>
<div class="ab" style="left:1148px;top:372px;width:45px;height:36px;border:1px solid #e6e6e6;display:flex;align-items:center;justify-content:center;text-align:center;color:#555;font-size:12px;line-height:15px;padding-top:2px;"><span><span style="font-size:13px">0.6</span></span></div>
<div class="ab" style="left:1192px;top:372px;width:46px;height:36px;border:1px solid #e6e6e6;display:flex;align-items:center;justify-content:center;text-align:center;color:#555;font-size:12px;line-height:15px;padding-top:2px;"><span><span style="font-size:13px">1</span></span></div>
<div class="ab" style="left:1237px;top:372px;width:88px;height:36px;border:1px solid #e6e6e6;display:flex;align-items:center;justify-content:center;text-align:center;color:#555;font-size:12px;line-height:15px;padding-top:2px;"><span></span></div>
<div class="ab" style="left:519px;top:407px;width:45px;height:36px;border:1px solid #e6e6e6;display:flex;align-items:center;justify-content:center;text-align:center;color:#555;font-size:12px;line-height:15px;padding-top:2px;"><span>重</span></div>
<div class="ab" style="left:563px;top:407px;width:46px;height:36px;border:1px solid #e6e6e6;display:flex;align-items:center;justify-content:center;text-align:center;color:#555;font-size:12px;line-height:15px;padding-top:2px;"><span><span style="position:relative;display:inline-block;font-size:12px;padding-right:3px">m<span style="position:absolute;font-size:7px;left:8.2px;top:-2.5px">2</span></span></span></div>
<div class="ab" style="left:608px;top:407px;width:45px;height:36px;border:1px solid #e6e6e6;display:flex;align-items:center;justify-content:center;text-align:center;color:#555;font-size:12px;line-height:15px;padding-top:2px;"><span><span style="font-size:13px">120</span></span></div>
<div class="ab" style="left:652px;top:407px;width:45px;height:36px;border:1px solid #e6e6e6;display:flex;align-items:center;justify-content:center;text-align:center;color:#555;font-size:12px;line-height:15px;padding-top:2px;"><span><span style="font-size:13px">110</span></span></div>
<div class="ab" style="left:696px;top:407px;width:45px;height:36px;border:1px solid #e6e6e6;display:flex;align-items:center;justify-content:center;text-align:center;color:#555;font-size:12px;line-height:15px;padding-top:2px;"><span><span style="font-size:13px">130</span></span></div>
<div class="ab" style="left:740px;top:407px;width:45px;height:36px;border:1px solid #e6e6e6;display:flex;align-items:center;justify-content:center;text-align:center;color:#555;font-size:12px;line-height:15px;padding-top:2px;"><span><span style="font-size:13px">120</span></span></div>
<div class="ab" style="left:784px;top:407px;width:46px;height:36px;border:1px solid #e6e6e6;display:flex;align-items:center;justify-content:center;text-align:center;color:#555;font-size:12px;line-height:15px;padding-top:2px;"><span><span style="font-size:13px">110</span></span></div>
<div class="ab" style="left:829px;top:407px;width:45px;height:36px;border:1px solid #e6e6e6;display:flex;align-items:center;justify-content:center;text-align:center;color:#555;font-size:12px;line-height:15px;padding-top:2px;"><span><span style="font-size:13px">121</span></span></div>
<div class="ab" style="left:873px;top:407px;width:45px;height:36px;border:1px solid #e6e6e6;display:flex;align-items:center;justify-content:center;text-align:center;color:#555;font-size:12px;line-height:15px;padding-top:2px;"><span><span style="font-size:13px">20</span></span></div>
<div class="ab" style="left:917px;top:407px;width:46px;height:36px;border:1px solid #e6e6e6;display:flex;align-items:center;justify-content:center;text-align:center;color:#555;font-size:12px;line-height:15px;padding-top:2px;"><span><span style="font-size:13px">131</span></span></div>
<div class="ab" style="left:962px;top:407px;width:45px;height:36px;border:1px solid #e6e6e6;display:flex;align-items:center;justify-content:center;text-align:center;color:#555;font-size:12px;line-height:15px;padding-top:2px;"><span><span style="font-size:13px">120</span></span></div>
<div class="ab" style="left:1006px;top:407px;width:45px;height:36px;border:1px solid #e6e6e6;display:flex;align-items:center;justify-content:center;text-align:center;color:#555;font-size:12px;line-height:15px;padding-top:2px;"><span><span style="font-size:13px">111</span></span></div>
<div class="ab" style="left:1050px;top:407px;width:99px;height:36px;border:1px solid #e6e6e6;display:flex;align-items:center;justify-content:center;text-align:center;color:#555;font-size:12px;line-height:15px;padding-top:2px;"><span><span style="font-size:13px">1093</span></span></div>
<div class="ab" style="left:1148px;top:407px;width:45px;height:36px;border:1px solid #e6e6e6;display:flex;align-items:center;justify-content:center;text-align:center;color:#555;font-size:12px;line-height:15px;padding-top:2px;"><span><span style="font-size:13px">1</span></span></div>
<div class="ab" style="left:1192px;top:407px;width:46px;height:36px;border:1px solid #e6e6e6;display:flex;align-items:center;justify-content:center;text-align:center;color:#555;font-size:12px;line-height:15px;padding-top:2px;"><span><span style="font-size:13px">1</span></span></div>
<div class="ab" style="left:1237px;top:407px;width:88px;height:36px;border:1px solid #e6e6e6;display:flex;align-items:center;justify-content:center;text-align:center;color:#555;font-size:12px;line-height:15px;padding-top:2px;"><span><span style="font-size:13px">1093</span></span></div>
<div class="ab" style="left:519px;top:442px;width:45px;height:37px;border:1px solid #e6e6e6;display:flex;align-items:center;justify-content:center;text-align:center;color:#555;font-size:12px;line-height:15px;padding-top:2px;"><span>中</span></div>
<div class="ab" style="left:563px;top:442px;width:46px;height:37px;border:1px solid #e6e6e6;display:flex;align-items:center;justify-content:center;text-align:center;color:#555;font-size:12px;line-height:15px;padding-top:2px;"><span><span style="position:relative;display:inline-block;font-size:12px;padding-right:3px">m<span style="position:absolute;font-size:7px;left:8.2px;top:-2.5px">2</span></span></span></div>
<div class="ab" style="left:608px;top:442px;width:45px;height:37px;border:1px solid #e6e6e6;display:flex;align-items:center;justify-content:center;text-align:center;color:#555;font-size:12px;line-height:15px;padding-top:2px;"><span></span></div>
<div class="ab" style="left:652px;top:442px;width:45px;height:37px;border:1px solid #e6e6e6;display:flex;align-items:center;justify-content:center;text-align:center;color:#555;font-size:12px;line-height:15px;padding-top:2px;"><span></span></div>
<div class="ab" style="left:696px;top:442px;width:45px;height:37px;border:1px solid #e6e6e6;display:flex;align-items:center;justify-content:center;text-align:center;color:#555;font-size:12px;line-height:15px;padding-top:2px;"><span></span></div>
<div class="ab" style="left:740px;top:442px;width:45px;height:37px;border:1px solid #e6e6e6;display:flex;align-items:center;justify-content:center;text-align:center;color:#555;font-size:12px;line-height:15px;padding-top:2px;"><span></span></div>
<div class="ab" style="left:784px;top:442px;width:46px;height:37px;border:1px solid #e6e6e6;display:flex;align-items:center;justify-content:center;text-align:center;color:#555;font-size:12px;line-height:15px;padding-top:2px;"><span></span></div>
<div class="ab" style="left:829px;top:442px;width:45px;height:37px;border:1px solid #e6e6e6;display:flex;align-items:center;justify-content:center;text-align:center;color:#555;font-size:12px;line-height:15px;padding-top:2px;"><span></span></div>
<div class="ab" style="left:873px;top:442px;width:45px;height:37px;border:1px solid #e6e6e6;display:flex;align-items:center;justify-content:center;text-align:center;color:#555;font-size:12px;line-height:15px;padding-top:2px;"><span></span></div>
<div class="ab" style="left:917px;top:442px;width:46px;height:37px;border:1px solid #e6e6e6;display:flex;align-items:center;justify-content:center;text-align:center;color:#555;font-size:12px;line-height:15px;padding-top:2px;"><span></span></div>
<div class="ab" style="left:962px;top:442px;width:45px;height:37px;border:1px solid #e6e6e6;display:flex;align-items:center;justify-content:center;text-align:center;color:#555;font-size:12px;line-height:15px;padding-top:2px;"><span></span></div>
<div class="ab" style="left:1006px;top:442px;width:45px;height:37px;border:1px solid #e6e6e6;display:flex;align-items:center;justify-content:center;text-align:center;color:#555;font-size:12px;line-height:15px;padding-top:2px;"><span></span></div>
<div class="ab" style="left:1050px;top:442px;width:99px;height:37px;border:1px solid #e6e6e6;display:flex;align-items:center;justify-content:center;text-align:center;color:#555;font-size:12px;line-height:15px;padding-top:2px;"><span></span></div>
<div class="ab" style="left:1148px;top:442px;width:45px;height:37px;border:1px solid #e6e6e6;display:flex;align-items:center;justify-content:center;text-align:center;color:#555;font-size:12px;line-height:15px;padding-top:2px;"><span><span style="font-size:13px">0.8</span></span></div>
<div class="ab" style="left:1192px;top:442px;width:46px;height:37px;border:1px solid #e6e6e6;display:flex;align-items:center;justify-content:center;text-align:center;color:#555;font-size:12px;line-height:15px;padding-top:2px;"><span><span style="font-size:13px">1</span></span></div>
<div class="ab" style="left:1237px;top:442px;width:88px;height:37px;border:1px solid #e6e6e6;display:flex;align-items:center;justify-content:center;text-align:center;color:#555;font-size:12px;line-height:15px;padding-top:2px;"><span></span></div>
<div class="ab" style="left:519px;top:478px;width:45px;height:36px;border:1px solid #e6e6e6;display:flex;align-items:center;justify-content:center;text-align:center;color:#555;font-size:12px;line-height:15px;padding-top:2px;"><span>轻</span></div>
<div class="ab" style="left:563px;top:478px;width:46px;height:36px;border:1px solid #e6e6e6;display:flex;align-items:center;justify-content:center;text-align:center;color:#555;font-size:12px;line-height:15px;padding-top:2px;"><span><span style="position:relative;display:inline-block;font-size:12px;padding-right:3px">m<span style="position:absolute;font-size:7px;left:8.2px;top:-2.5px">2</span></span></span></div>
<div class="ab" style="left:608px;top:478px;width:45px;height:36px;border:1px solid #e6e6e6;display:flex;align-items:center;justify-content:center;text-align:center;color:#555;font-size:12px;line-height:15px;padding-top:2px;"><span><span style="font-size:13px">40</span></span></div>
<div class="ab" style="left:652px;top:478px;width:45px;height:36px;border:1px solid #e6e6e6;display:flex;align-items:center;justify-content:center;text-align:center;color:#555;font-size:12px;line-height:15px;padding-top:2px;"><span></span></div>
<div class="ab" style="left:696px;top:478px;width:45px;height:36px;border:1px solid #e6e6e6;display:flex;align-items:center;justify-content:center;text-align:center;color:#555;font-size:12px;line-height:15px;padding-top:2px;"><span></span></div>
<div class="ab" style="left:740px;top:478px;width:45px;height:36px;border:1px solid #e6e6e6;display:flex;align-items:center;justify-content:center;text-align:center;color:#555;font-size:12px;line-height:15px;padding-top:2px;"><span></span></div>
<div class="ab" style="left:784px;top:478px;width:46px;height:36px;border:1px solid #e6e6e6;display:flex;align-items:center;justify-content:center;text-align:center;color:#555;font-size:12px;line-height:15px;padding-top:2px;"><span></span></div>
<div class="ab" style="left:829px;top:478px;width:45px;height:36px;border:1px solid #e6e6e6;display:flex;align-items:center;justify-content:center;text-align:center;color:#555;font-size:12px;line-height:15px;padding-top:2px;"><span></span></div>
<div class="ab" style="left:873px;top:478px;width:45px;height:36px;border:1px solid #e6e6e6;display:flex;align-items:center;justify-content:center;text-align:center;color:#555;font-size:12px;line-height:15px;padding-top:2px;"><span></span></div>
<div class="ab" style="left:917px;top:478px;width:46px;height:36px;border:1px solid #e6e6e6;display:flex;align-items:center;justify-content:center;text-align:center;color:#555;font-size:12px;line-height:15px;padding-top:2px;"><span></span></div>
<div class="ab" style="left:962px;top:478px;width:45px;height:36px;border:1px solid #e6e6e6;display:flex;align-items:center;justify-content:center;text-align:center;color:#555;font-size:12px;line-height:15px;padding-top:2px;"><span></span></div>
<div class="ab" style="left:1006px;top:478px;width:45px;height:36px;border:1px solid #e6e6e6;display:flex;align-items:center;justify-content:center;text-align:center;color:#555;font-size:12px;line-height:15px;padding-top:2px;"><span></span></div>
<div class="ab" style="left:1050px;top:478px;width:99px;height:36px;border:1px solid #e6e6e6;display:flex;align-items:center;justify-content:center;text-align:center;color:#555;font-size:12px;line-height:15px;padding-top:2px;"><span><span style="font-size:13px">40</span></span></div>
<div class="ab" style="left:1148px;top:478px;width:45px;height:36px;border:1px solid #e6e6e6;display:flex;align-items:center;justify-content:center;text-align:center;color:#555;font-size:12px;line-height:15px;padding-top:2px;"><span><span style="font-size:13px">0.6</span></span></div>
<div class="ab" style="left:1192px;top:478px;width:46px;height:36px;border:1px solid #e6e6e6;display:flex;align-items:center;justify-content:center;text-align:center;color:#555;font-size:12px;line-height:15px;padding-top:2px;"><span><span style="font-size:13px">1</span></span></div>
<div class="ab" style="left:1237px;top:478px;width:88px;height:36px;border:1px solid #e6e6e6;display:flex;align-items:center;justify-content:center;text-align:center;color:#555;font-size:12px;line-height:15px;padding-top:2px;"><span><span style="font-size:13px">24</span></span></div>
<div class="ab" style="left:519px;top:513px;width:45px;height:36px;border:1px solid #e6e6e6;display:flex;align-items:center;justify-content:center;text-align:center;color:#555;font-size:12px;line-height:15px;padding-top:2px;"><span>重</span></div>
<div class="ab" style="left:563px;top:513px;width:46px;height:36px;border:1px solid #e6e6e6;display:flex;align-items:center;justify-content:center;text-align:center;color:#555;font-size:12px;line-height:15px;padding-top:2px;"><span><span style="position:relative;display:inline-block;font-size:12px;padding-right:3px">m<span style="position:absolute;font-size:7px;left:8.2px;top:-2.5px">2</span></span></span></div>
<div class="ab" style="left:608px;top:513px;width:45px;height:36px;border:1px solid #e6e6e6;display:flex;align-items:center;justify-content:center;text-align:center;color:#555;font-size:12px;line-height:15px;padding-top:2px;"><span><span style="font-size:13px">70</span></span></div>
<div class="ab" style="left:652px;top:513px;width:45px;height:36px;border:1px solid #e6e6e6;display:flex;align-items:center;justify-content:center;text-align:center;color:#555;font-size:12px;line-height:15px;padding-top:2px;"><span><span style="font-size:13px">90</span></span></div>
<div class="ab" style="left:696px;top:513px;width:45px;height:36px;border:1px solid #e6e6e6;display:flex;align-items:center;justify-content:center;text-align:center;color:#555;font-size:12px;line-height:15px;padding-top:2px;"><span><span style="font-size:13px">110</span></span></div>
<div class="ab" style="left:740px;top:513px;width:45px;height:36px;border:1px solid #e6e6e6;display:flex;align-items:center;justify-content:center;text-align:center;color:#555;font-size:12px;line-height:15px;padding-top:2px;"><span><span style="font-size:13px">20</span></span></div>
<div class="ab" style="left:784px;top:513px;width:46px;height:36px;border:1px solid #e6e6e6;display:flex;align-items:center;justify-content:center;text-align:center;color:#555;font-size:12px;line-height:15px;padding-top:2px;"><span><span style="font-size:13px">30</span></span></div>
<div class="ab" style="left:829px;top:513px;width:45px;height:36px;border:1px solid #e6e6e6;display:flex;align-items:center;justify-content:center;text-align:center;color:#555;font-size:12px;line-height:15px;padding-top:2px;"><span><span style="font-size:13px">20</span></span></div>
<div class="ab" style="left:873px;top:513px;width:45px;height:36px;border:1px solid #e6e6e6;display:flex;align-items:center;justify-content:center;text-align:center;color:#555;font-size:12px;line-height:15px;padding-top:2px;"><span><span style="font-size:13px">20</span></span></div>
<div class="ab" style="left:917px;top:513px;width:46px;height:36px;border:1px solid #e6e6e6;display:flex;align-items:center;justify-content:center;text-align:center;color:#555;font-size:12px;line-height:15px;padding-top:2px;"><span><span style="font-size:13px">60</span></span></div>
<div class="ab" style="left:962px;top:513px;width:45px;height:36px;border:1px solid #e6e6e6;display:flex;align-items:center;justify-content:center;text-align:center;color:#555;font-size:12px;line-height:15px;padding-top:2px;"><span><span style="font-size:13px">30</span></span></div>
<div class="ab" style="left:1006px;top:513px;width:45px;height:36px;border:1px solid #e6e6e6;display:flex;align-items:center;justify-content:center;text-align:center;color:#555;font-size:12px;line-height:15px;padding-top:2px;"><span><span style="font-size:13px">130</span></span></div>
<div class="ab" style="left:1050px;top:513px;width:99px;height:36px;border:1px solid #e6e6e6;display:flex;align-items:center;justify-content:center;text-align:center;color:#555;font-size:12px;line-height:15px;padding-top:2px;"><span><span style="font-size:13px">580</span></span></div>
<div class="ab" style="left:1148px;top:513px;width:45px;height:36px;border:1px solid #e6e6e6;display:flex;align-items:center;justify-content:center;text-align:center;color:#555;font-size:12px;line-height:15px;padding-top:2px;"><span><span style="font-size:13px">0.8</span></span></div>
<div class="ab" style="left:1192px;top:513px;width:46px;height:36px;border:1px solid #e6e6e6;display:flex;align-items:center;justify-content:center;text-align:center;color:#555;font-size:12px;line-height:15px;padding-top:2px;"><span><span style="font-size:13px">1</span></span></div>
<div class="ab" style="left:1237px;top:513px;width:88px;height:36px;border:1px solid #e6e6e6;display:flex;align-items:center;justify-content:center;text-align:center;color:#555;font-size:12px;line-height:15px;padding-top:2px;"><span><span style="font-size:13px">464</span></span></div>
<div class="ab" style="left:519px;top:548px;width:45px;height:36px;border:1px solid #e6e6e6;display:flex;align-items:center;justify-content:center;text-align:center;color:#555;font-size:12px;line-height:15px;padding-top:2px;"><span>轻</span></div>
<div class="ab" style="left:563px;top:548px;width:46px;height:36px;border:1px solid #e6e6e6;display:flex;align-items:center;justify-content:center;text-align:center;color:#555;font-size:12px;line-height:15px;padding-top:2px;"><span><span style="font-size:13px">m</span></span></div>
<div class="ab" style="left:608px;top:548px;width:45px;height:36px;border:1px solid #e6e6e6;display:flex;align-items:center;justify-content:center;text-align:center;color:#555;font-size:12px;line-height:15px;padding-top:2px;"><span><span style="font-size:13px">60</span></span></div>
<div class="ab" style="left:652px;top:548px;width:45px;height:36px;border:1px solid #e6e6e6;display:flex;align-items:center;justify-content:center;text-align:center;color:#555;font-size:12px;line-height:15px;padding-top:2px;"><span><span style="font-size:13px">180</span></span></div>
<div class="ab" style="left:696px;top:548px;width:45px;height:36px;border:1px solid #e6e6e6;display:flex;align-items:center;justify-content:center;text-align:center;color:#555;font-size:12px;line-height:15px;padding-top:2px;"><span><span style="font-size:13px">210</span></span></div>
<div class="ab" style="left:740px;top:548px;width:45px;height:36px;border:1px solid #e6e6e6;display:flex;align-items:center;justify-content:center;text-align:center;color:#555;font-size:12px;line-height:15px;padding-top:2px;"><span><span style="font-size:13px">160</span></span></div>
<div class="ab" style="left:784px;top:548px;width:46px;height:36px;border:1px solid #e6e6e6;display:flex;align-items:center;justify-content:center;text-align:center;color:#555;font-size:12px;line-height:15px;padding-top:2px;"><span><span style="font-size:13px">180</span></span></div>
<div class="ab" style="left:829px;top:548px;width:45px;height:36px;border:1px solid #e6e6e6;display:flex;align-items:center;justify-content:center;text-align:center;color:#555;font-size:12px;line-height:15px;padding-top:2px;"><span><span style="font-size:13px">270</span></span></div>
<div class="ab" style="left:873px;top:548px;width:45px;height:36px;border:1px solid #e6e6e6;display:flex;align-items:center;justify-content:center;text-align:center;color:#555;font-size:12px;line-height:15px;padding-top:2px;"><span><span style="font-size:13px">120</span></span></div>
<div class="ab" style="left:917px;top:548px;width:46px;height:36px;border:1px solid #e6e6e6;display:flex;align-items:center;justify-content:center;text-align:center;color:#555;font-size:12px;line-height:15px;padding-top:2px;"><span><span style="font-size:13px">140</span></span></div>
<div class="ab" style="left:962px;top:548px;width:45px;height:36px;border:1px solid #e6e6e6;display:flex;align-items:center;justify-content:center;text-align:center;color:#555;font-size:12px;line-height:15px;padding-top:2px;"><span><span style="font-size:13px">100</span></span></div>
<div class="ab" style="left:1006px;top:548px;width:45px;height:36px;border:1px solid #e6e6e6;display:flex;align-items:center;justify-content:center;text-align:center;color:#555;font-size:12px;line-height:15px;padding-top:2px;"><span><span style="font-size:13px">70</span></span></div>
<div class="ab" style="left:1050px;top:548px;width:99px;height:36px;border:1px solid #e6e6e6;display:flex;align-items:center;justify-content:center;text-align:center;color:#555;font-size:12px;line-height:15px;padding-top:2px;"><span><span style="font-size:13px">1490</span></span></div>
<div class="ab" style="left:1148px;top:548px;width:45px;height:36px;border:1px solid #e6e6e6;display:flex;align-items:center;justify-content:center;text-align:center;color:#555;font-size:12px;line-height:15px;padding-top:2px;"><span><span style="font-size:13px">0.6</span></span></div>
<div class="ab" style="left:1192px;top:548px;width:46px;height:36px;border:1px solid #e6e6e6;display:flex;align-items:center;justify-content:center;text-align:center;color:#555;font-size:12px;line-height:15px;padding-top:2px;"><span><span style="font-size:13px">0.2</span></span></div>
<div class="ab" style="left:1237px;top:548px;width:88px;height:36px;border:1px solid #e6e6e6;display:flex;align-items:center;justify-content:center;text-align:center;color:#555;font-size:12px;line-height:15px;padding-top:2px;"><span><span style="font-size:13px">178.8</span></span></div>
<div class="ab" style="left:519px;top:583px;width:45px;height:37px;border:1px solid #e6e6e6;display:flex;align-items:center;justify-content:center;text-align:center;color:#555;font-size:12px;line-height:15px;padding-top:2px;"><span>重</span></div>
<div class="ab" style="left:563px;top:583px;width:46px;height:37px;border:1px solid #e6e6e6;display:flex;align-items:center;justify-content:center;text-align:center;color:#555;font-size:12px;line-height:15px;padding-top:2px;"><span><span style="font-size:13px">m</span></span></div>
<div class="ab" style="left:608px;top:583px;width:45px;height:37px;border:1px solid #e6e6e6;display:flex;align-items:center;justify-content:center;text-align:center;color:#555;font-size:12px;line-height:15px;padding-top:2px;"><span><span style="font-size:13px">50</span></span></div>
<div class="ab" style="left:652px;top:583px;width:45px;height:37px;border:1px solid #e6e6e6;display:flex;align-items:center;justify-content:center;text-align:center;color:#555;font-size:12px;line-height:15px;padding-top:2px;"><span><span style="font-size:13px">40</span></span></div>
<div class="ab" style="left:696px;top:583px;width:45px;height:37px;border:1px solid #e6e6e6;display:flex;align-items:center;justify-content:center;text-align:center;color:#555;font-size:12px;line-height:15px;padding-top:2px;"><span><span style="font-size:13px">95</span></span></div>
<div class="ab" style="left:740px;top:583px;width:45px;height:37px;border:1px solid #e6e6e6;display:flex;align-items:center;justify-content:center;text-align:center;color:#555;font-size:12px;line-height:15px;padding-top:2px;"><span><span style="font-size:13px">95</span></span></div>
<div class="ab" style="left:784px;top:583px;width:46px;height:37px;border:1px solid #e6e6e6;display:flex;align-items:center;justify-content:center;text-align:center;color:#555;font-size:12px;line-height:15px;padding-top:2px;"><span><span style="font-size:13px">85</span></span></div>
<div class="ab" style="left:829px;top:583px;width:45px;height:37px;border:1px solid #e6e6e6;display:flex;align-items:center;justify-content:center;text-align:center;color:#555;font-size:12px;line-height:15px;padding-top:2px;"><span><span style="font-size:13px">80</span></span></div>
<div class="ab" style="left:873px;top:583px;width:45px;height:37px;border:1px solid #e6e6e6;display:flex;align-items:center;justify-content:center;text-align:center;color:#555;font-size:12px;line-height:15px;padding-top:2px;"><span><span style="font-size:13px">80</span></span></div>
<div class="ab" style="left:917px;top:583px;width:46px;height:37px;border:1px solid #e6e6e6;display:flex;align-items:center;justify-content:center;text-align:center;color:#555;font-size:12px;line-height:15px;padding-top:2px;"><span><span style="font-size:13px">75</span></span></div>
<div class="ab" style="left:962px;top:583px;width:45px;height:37px;border:1px solid #e6e6e6;display:flex;align-items:center;justify-content:center;text-align:center;color:#555;font-size:12px;line-height:15px;padding-top:2px;"><span><span style="font-size:13px">80</span></span></div>
<div class="ab" style="left:1006px;top:583px;width:45px;height:37px;border:1px solid #e6e6e6;display:flex;align-items:center;justify-content:center;text-align:center;color:#555;font-size:12px;line-height:15px;padding-top:2px;"><span><span style="font-size:13px">55</span></span></div>
<div class="ab" style="left:1050px;top:583px;width:99px;height:37px;border:1px solid #e6e6e6;display:flex;align-items:center;justify-content:center;text-align:center;color:#555;font-size:12px;line-height:15px;padding-top:2px;"><span><span style="font-size:13px">735</span></span></div>
<div class="ab" style="left:1148px;top:583px;width:45px;height:37px;border:1px solid #e6e6e6;display:flex;align-items:center;justify-content:center;text-align:center;color:#555;font-size:12px;line-height:15px;padding-top:2px;"><span><span style="font-size:13px">1</span></span></div>
<div class="ab" style="left:1192px;top:583px;width:46px;height:37px;border:1px solid #e6e6e6;display:flex;align-items:center;justify-content:center;text-align:center;color:#555;font-size:12px;line-height:15px;padding-top:2px;"><span><span style="font-size:13px">0.2</span></span></div>
<div class="ab" style="left:1237px;top:583px;width:88px;height:37px;border:1px solid #e6e6e6;display:flex;align-items:center;justify-content:center;text-align:center;color:#555;font-size:12px;line-height:15px;padding-top:2px;"><span><span style="font-size:13px">147</span></span></div>
<div class="ab" style="left:1350px;top:117px;width:17px;height:492px;background:#f0f0f0"></div>
<div class="ab" style="left:1351px;top:151px;width:15px;height:164px;background:#c8c8c8"></div>
<svg class="ab" style="left:1352px;top:133.5px" width="14" height="10" viewBox="0 0 14 10"><path d="M1.1 6.2 L7 0.8 L12.9 6.2 V10 L7 4.8 L1.1 10Z" fill="#565656"/></svg>
<svg class="ab" style="left:1352px;top:583px" width="14" height="10" viewBox="0 0 14 10"><path d="M1.1 0 L7 5 L12.9 0 V3.6 L7 9.2 L1.1 3.6Z" fill="#565656"/></svg>
<svg class="ab" style="left:1330px;top:571px" width="23" height="23" viewBox="0 0 23 23">
<rect x="5.4" y="5.9" width="14.4" height="14.4" fill="none" stroke="#c6c6c6" stroke-width="2.8"/>
<path d="M4 4 L13.8 14.3" stroke="#c6c6c6" stroke-width="2.8"/>
<path d="M1 1.5 H9.5 L1 10Z" fill="#c6c6c6"/></svg>
</body></html>
